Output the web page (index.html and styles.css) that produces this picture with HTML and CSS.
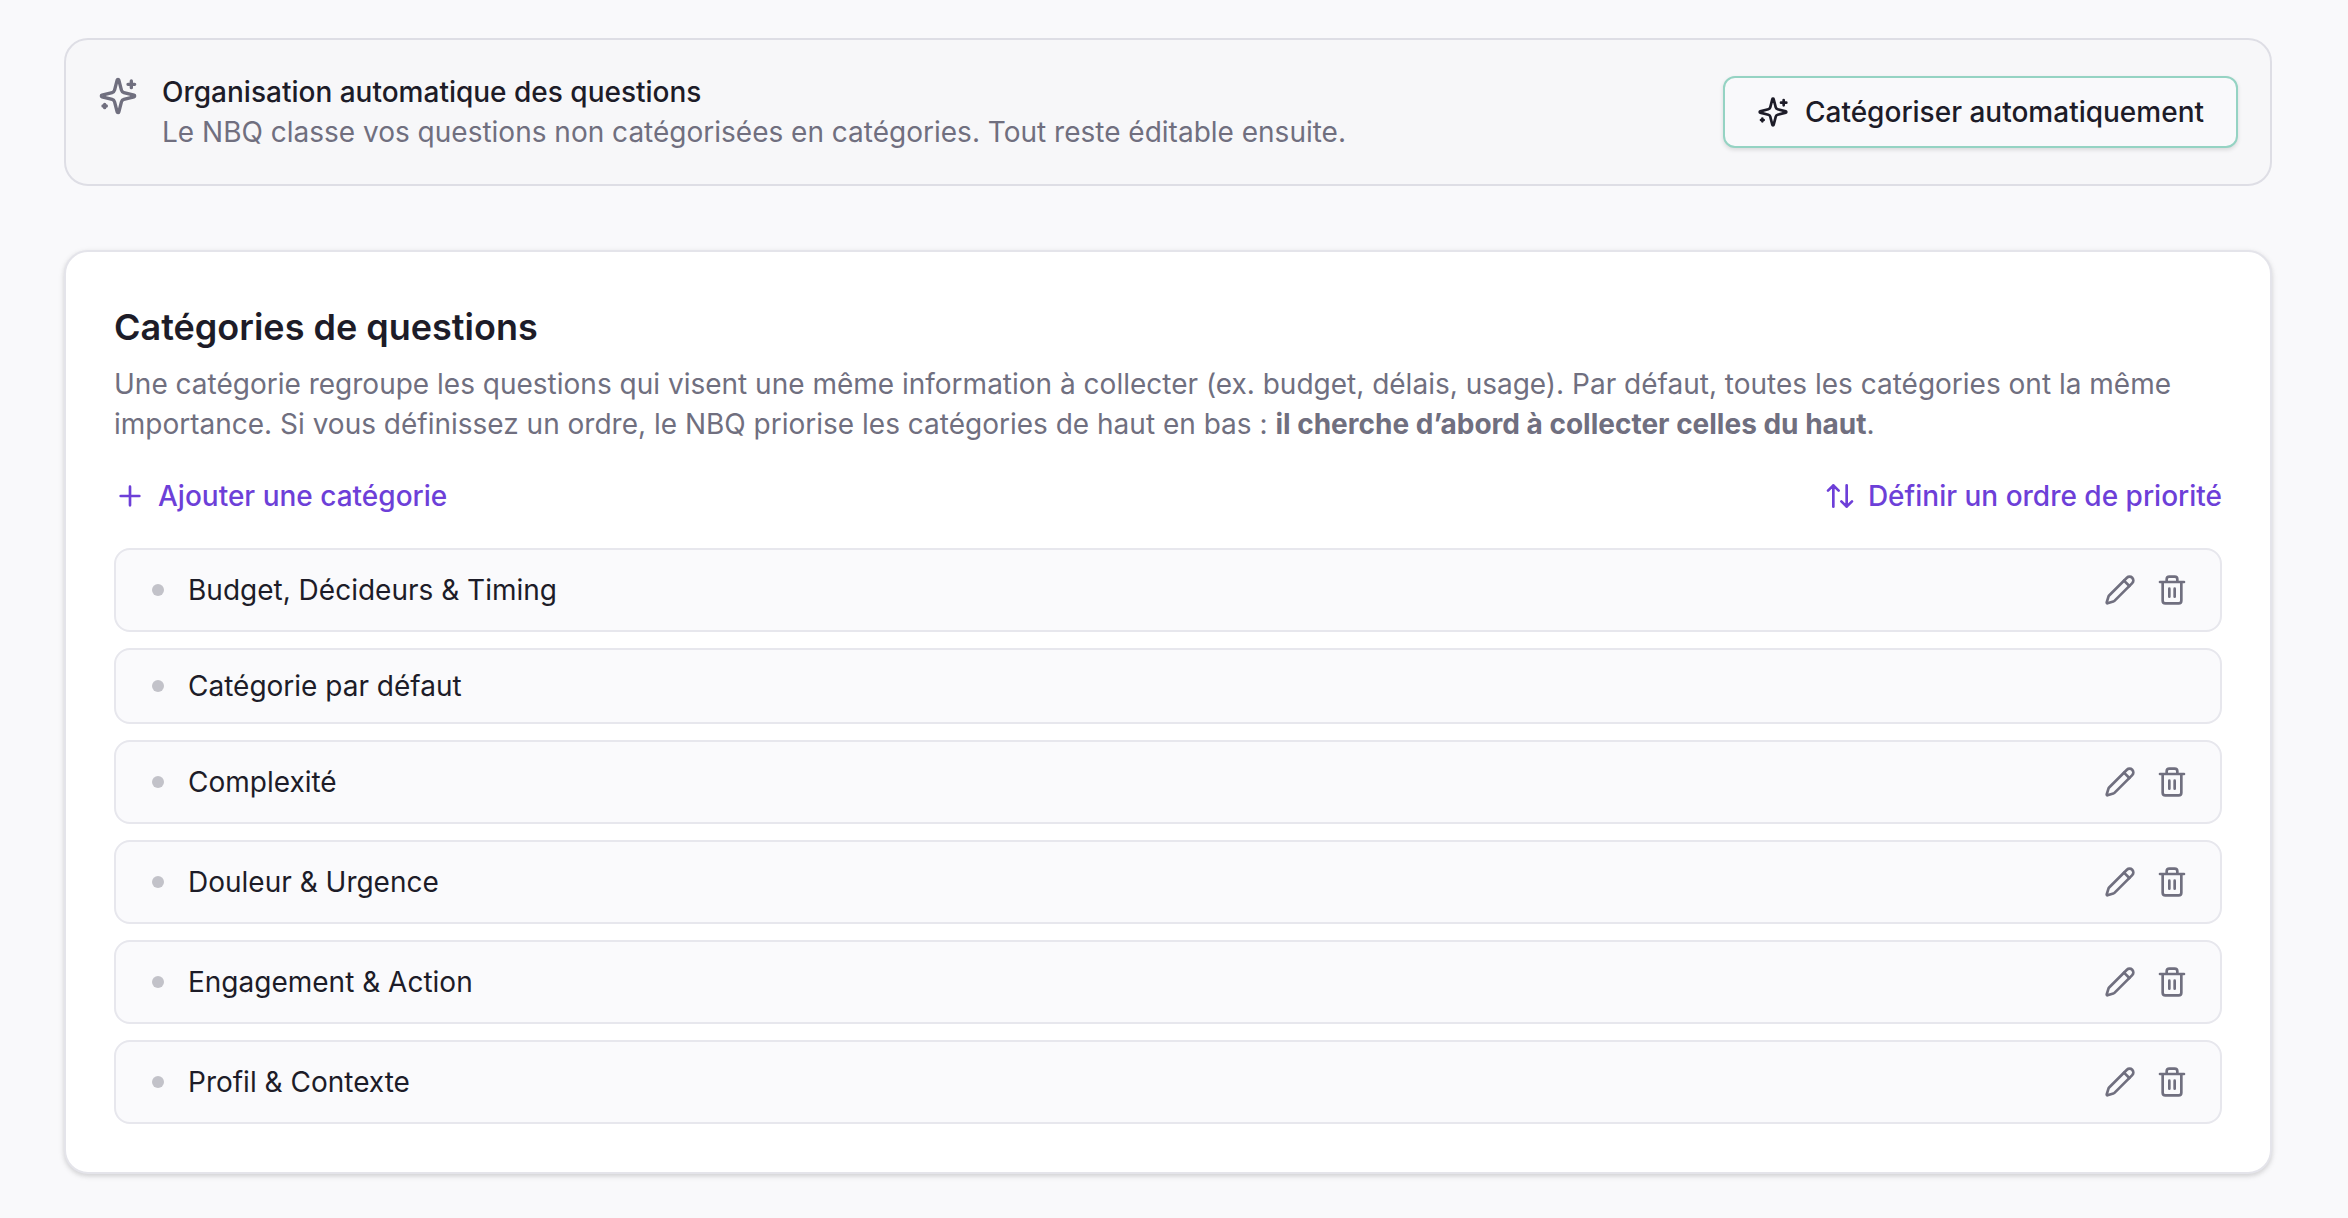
FILE: index.html
```
<!DOCTYPE html>
<html lang="fr">
<head>
    <meta charset="UTF-8">
    <meta name="viewport" content="width=device-width, initial-scale=1.0">
    <title>Catégories de questions</title>
    <link rel="stylesheet" href="styles.css">
</head>
<body>
    <!-- Icônes partagées -->
    <svg class="sprite" aria-hidden="true">
        <symbol id="icon-sparkles" viewBox="0 0 24 24">
            <path d="M9.937 15.5A2 2 0 0 0 8.5 14.063l-6.135-1.582a.5.5 0 0 1 0-.962L8.5 9.936A2 2 0 0 0 9.937 8.5l1.582-6.135a.5.5 0 0 1 .963 0L14.063 8.5A2 2 0 0 0 15.5 9.937l6.135 1.581a.5.5 0 0 1 0 .964L15.5 14.063a2 2 0 0 0-1.437 1.437l-1.582 6.135a.5.5 0 0 1-.963 0z"/>
            <path d="M20 3v4M22 5h-4M4 17v2M5 18H3"/>
        </symbol>
        <symbol id="icon-plus" viewBox="0 0 24 24">
            <path d="M5 12h14M12 5v14"/>
        </symbol>
        <symbol id="icon-order" viewBox="0 0 24 24">
            <path d="m3 8 4-4 4 4M7 4v16M21 16l-4 4-4-4M17 20V4"/>
        </symbol>
        <symbol id="icon-pencil" viewBox="0 0 24 24">
            <path d="M21.174 6.812a1 1 0 0 0-3.986-3.987L3.842 16.174a2 2 0 0 0-.5.83l-1.321 4.352a.5.5 0 0 0 .623.622l4.353-1.32a2 2 0 0 0 .83-.497z"/>
            <path d="m15 5 4 4"/>
        </symbol>
        <symbol id="icon-trash" viewBox="0 0 24 24">
            <path d="M3 6h18M19 6v14a2 2 0 0 1-2 2H7a2 2 0 0 1-2-2V6M8 6V4a2 2 0 0 1 2-2h4a2 2 0 0 1 2 2v2M10 11v6M14 11v6"/>
        </symbol>
    </svg>

    <main>
        <section class="banner">
            <svg class="icon icon-lg"><use href="#icon-sparkles"/></svg>
            <div class="banner-text">
                <h2>Organisation automatique des questions</h2>
                <p>Le NBQ classe vos questions non catégorisées en catégories. Tout reste éditable ensuite.</p>
            </div>
            <button type="button" class="btn-outline">
                <svg class="icon"><use href="#icon-sparkles"/></svg>
                Catégoriser automatiquement
            </button>
        </section>

        <section class="card">
            <h1>Catégories de questions</h1>
            <p class="description">Une catégorie regroupe les questions qui visent une même information à collecter (ex. budget, délais, usage). Par défaut, toutes les catégories ont la même importance. Si vous définissez un ordre, le NBQ priorise les catégories de haut en bas : <strong>il cherche d’abord à collecter celles du haut</strong>.</p>

            <div class="actions">
                <button type="button" class="btn-link">
                    <svg class="icon"><use href="#icon-plus"/></svg>
                    Ajouter une catégorie
                </button>
                <button type="button" class="btn-link">
                    <svg class="icon"><use href="#icon-order"/></svg>
                    Définir un ordre de priorité
                </button>
            </div>

            <ul class="categories">
                <li>
                    <span class="name">Budget, Décideurs &amp; Timing</span>
                    <button type="button" class="btn-icon" aria-label="Modifier"><svg class="icon"><use href="#icon-pencil"/></svg></button>
                    <button type="button" class="btn-icon" aria-label="Supprimer"><svg class="icon"><use href="#icon-trash"/></svg></button>
                </li>
                <li>
                    <span class="name">Catégorie par défaut</span>
                </li>
                <li>
                    <span class="name">Complexité</span>
                    <button type="button" class="btn-icon" aria-label="Modifier"><svg class="icon"><use href="#icon-pencil"/></svg></button>
                    <button type="button" class="btn-icon" aria-label="Supprimer"><svg class="icon"><use href="#icon-trash"/></svg></button>
                </li>
                <li>
                    <span class="name">Douleur &amp; Urgence</span>
                    <button type="button" class="btn-icon" aria-label="Modifier"><svg class="icon"><use href="#icon-pencil"/></svg></button>
                    <button type="button" class="btn-icon" aria-label="Supprimer"><svg class="icon"><use href="#icon-trash"/></svg></button>
                </li>
                <li>
                    <span class="name">Engagement &amp; Action</span>
                    <button type="button" class="btn-icon" aria-label="Modifier"><svg class="icon"><use href="#icon-pencil"/></svg></button>
                    <button type="button" class="btn-icon" aria-label="Supprimer"><svg class="icon"><use href="#icon-trash"/></svg></button>
                </li>
                <li>
                    <span class="name">Profil &amp; Contexte</span>
                    <button type="button" class="btn-icon" aria-label="Modifier"><svg class="icon"><use href="#icon-pencil"/></svg></button>
                    <button type="button" class="btn-icon" aria-label="Supprimer"><svg class="icon"><use href="#icon-trash"/></svg></button>
                </li>
            </ul>
        </section>
    </main>
</body>
</html>
```
FILE: styles.css
```
* {
    box-sizing: border-box;
}

body {
    margin: 0;
    font-family: Inter, "Liberation Sans", sans-serif;
    font-size: 28px;
    line-height: 40px;
    color: #1d1c28;
    background-color: #f9f9fb;
}

h1,
h2,
p,
ul {
    margin: 0;
    padding: 0;
}

button {
    font: inherit;
    color: inherit;
    background: none;
    border: none;
    margin: 0;
    padding: 0;
    cursor: pointer;
}

main {
    display: flex;
    flex-direction: column;
    gap: 64px;
    padding: 38px 76px 44px 64px;
}

/* Icônes */
.sprite {
    display: none;
}

.icon {
    flex-shrink: 0;
    width: 32px;
    height: 32px;
    fill: none;
    stroke: currentColor;
    stroke-width: 2;
    stroke-linecap: round;
    stroke-linejoin: round;
}

.icon-lg {
    width: 40px;
    height: 40px;
    margin-top: 4px;
    color: #706f7f;
}

/* Bandeau */
.banner {
    display: flex;
    align-items: flex-start;
    gap: 24px;
    padding: 32px;
    background-color: #f7f7f9;
    border: 2px solid #dedee5;
    border-radius: 24px;
}

.banner-text {
    flex: 1;
}

.banner h2 {
    font-size: 28px;
    font-weight: 500;
}

.banner p {
    color: #706f7f;
}

.btn-outline {
    display: flex;
    align-items: center;
    align-self: center;
    gap: 16px;
    height: 72px;
    padding: 0 32px;
    font-weight: 500;
    background-color: #f9f9fb;
    border: 2px solid #95d3c3;
    border-radius: 12px;
    box-shadow: 0 2px 4px rgba(0, 0, 0, 0.12);
}

/* Carte des catégories */
.card {
    padding: 48px;
    background-color: #fff;
    border: 2px solid #e4e4ea;
    border-radius: 24px;
    box-shadow: 0 2px 6px rgba(0, 0, 0, 0.1), 0 2px 4px rgba(0, 0, 0, 0.08);
}

.card h1 {
    font-size: 36px;
    font-weight: 600;
    line-height: 54px;
}

.description {
    margin-top: 10px;
    color: #706f7f;
}

.description strong {
    font-weight: 700;
}

.actions {
    display: flex;
    justify-content: space-between;
    margin: 32px 0;
}

.btn-link {
    display: flex;
    align-items: center;
    gap: 12px;
    font-weight: 500;
    color: #6d3fd8;
}

.categories {
    display: flex;
    flex-direction: column;
    gap: 16px;
    list-style: none;
}

.categories li {
    display: flex;
    align-items: center;
    gap: 4px;
    padding: 16px 24px 16px 36px;
    background-color: #fafafc;
    border: 2px solid #e7e7ed;
    border-radius: 16px;
}

.name {
    display: flex;
    flex: 1;
    align-items: center;
    gap: 24px;
}

.name::before {
    content: "";
    width: 12px;
    height: 12px;
    border-radius: 50%;
    background-color: #c2c2c9;
}

.btn-icon {
    display: flex;
    padding: 8px;
    color: #706f7f;
}
```
